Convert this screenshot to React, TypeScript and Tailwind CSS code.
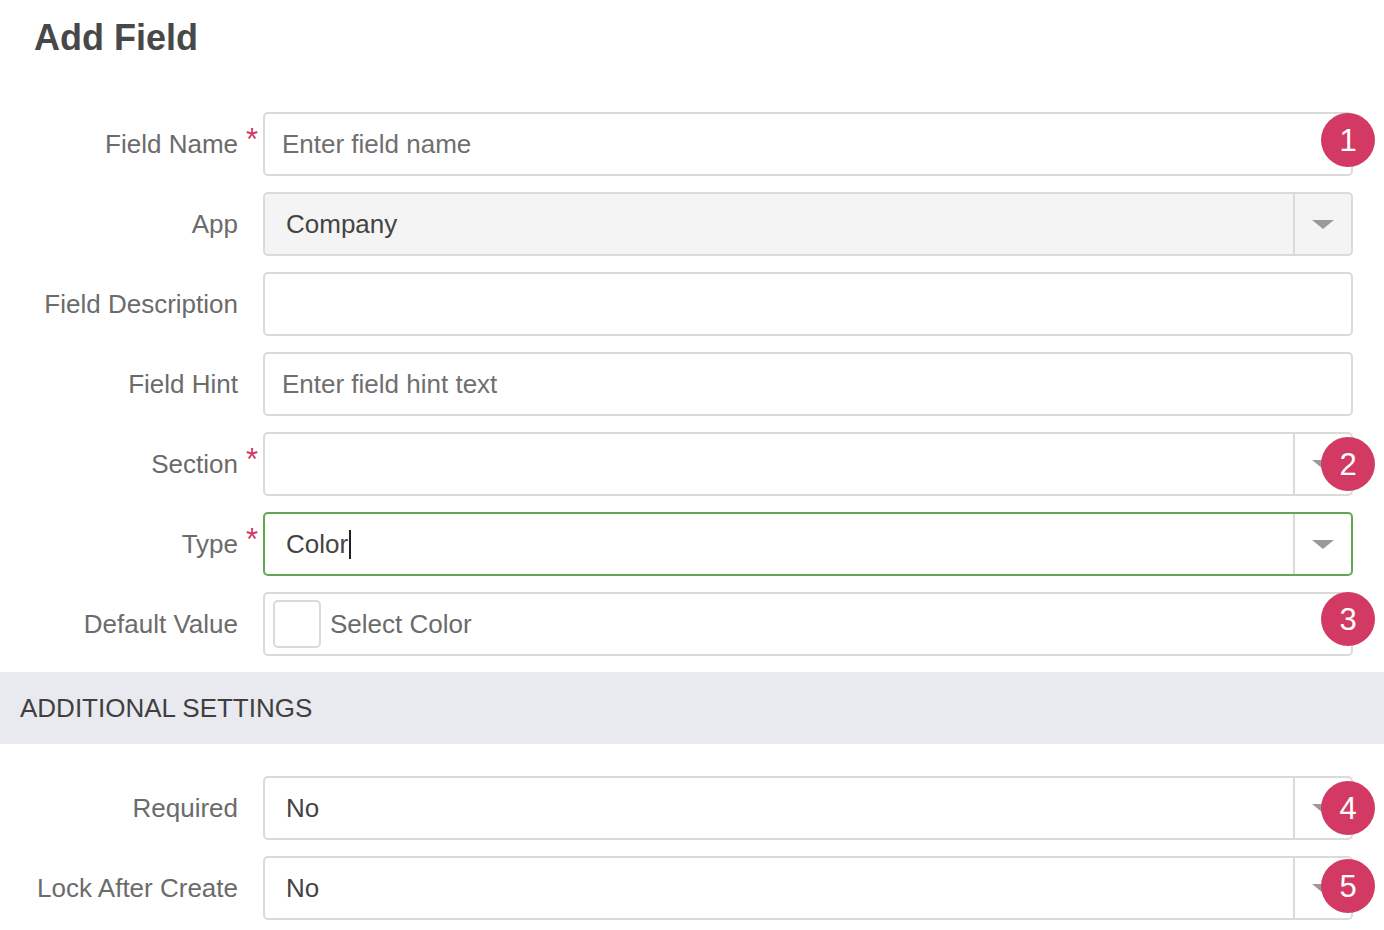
import React from "react";

const font = { fontFamily: '"Liberation Sans", Arial, sans-serif' };

function Badge({ n, className }: { n: number; className: string }) {
  return (
    <div
      className={`absolute right-[-22px] flex h-[54px] w-[54px] items-center justify-center rounded-full bg-[#d33a63] text-[31px] leading-none text-white ${className}`}
    >
      {n}
    </div>
  );
}

function Caret() {
  return (
    <div className="flex w-[58px] shrink-0 items-center justify-center border-l-2 border-[#dadada]">
      <svg width="22" height="9" viewBox="0 0 22 9">
        <path d="M0 0 L22 0 L11 9 Z" fill="#9a9a9a" />
      </svg>
    </div>
  );
}

function Row({
  label,
  required,
  children,
}: {
  label: string;
  required?: boolean;
  children: React.ReactNode;
}) {
  return (
    <div className="relative flex h-[64px] items-stretch">
      <div className="relative flex w-[263px] shrink-0 items-center justify-end pr-[25px] text-[26px] text-[#6b6b6b]">
        {label}
        {required && (
          <span className="absolute right-[5px] top-[12px] text-[31px] leading-none text-[#d33a63]">*</span>
        )}
      </div>
      <div className="flex-1">{children}</div>
    </div>
  );
}

export default function App() {
  return (
    <div className="min-h-[930px] w-[1384px] overflow-hidden bg-white" style={font}>
      <h1 className="pl-[34px] pt-[17px] text-[36px] font-bold leading-[42px] text-[#484848]">Add Field</h1>

      <div className="mt-[53px] flex flex-col gap-[16px] pr-[31px]">
        <Row label="Field Name" required>
          <div className="flex h-full items-center rounded-[5px] border-2 border-[#dadada] bg-white pl-[17px] text-[26px] text-[#6f6f6f]">
            Enter field name
          </div>
          <Badge n={1} className="top-[1px]" />
        </Row>

        <Row label="App">
          <div className="flex h-full rounded-[5px] border-2 border-[#dadada] bg-[#f4f4f4] text-[26px] text-[#444]">
            <div className="flex flex-1 items-center pl-[21px]">Company</div>
            <Caret />
          </div>
        </Row>

        <Row label="Field Description">
          <div className="h-full rounded-[5px] border-2 border-[#dadada] bg-white" />
        </Row>

        <Row label="Field Hint">
          <div className="flex h-full items-center rounded-[5px] border-2 border-[#dadada] bg-white pl-[17px] text-[26px] text-[#6f6f6f]">
            Enter field hint text
          </div>
        </Row>

        <Row label="Section" required>
          <div className="flex h-full rounded-[5px] border-2 border-[#dadada] bg-white">
            <div className="flex-1" />
            <Caret />
          </div>
          <Badge n={2} className="top-[5px]" />
        </Row>

        <Row label="Type" required>
          <div className="flex h-full rounded-[5px] border-2 border-[#5fa84f] bg-white text-[26px] text-[#444]">
            <div className="flex flex-1 items-center pl-[21px]">
              Color
              <span className="ml-[1px] inline-block h-[29px] w-[2px] bg-[#222]" />
            </div>
            <Caret />
          </div>
        </Row>

        <Row label="Default Value">
          <div className="flex h-full items-center gap-[9px] rounded-[5px] border-2 border-[#dadada] bg-white pl-[8px] text-[26px] text-[#6b6b6b]">
            <div className="h-[48px] w-[48px] rounded-[5px] border-2 border-[#dadada] bg-white" />
            Select Color
          </div>
          <Badge n={3} className="top-[0px]" />
        </Row>
      </div>

      <div className="mt-[16px] flex h-[72px] items-center bg-[#e9eaef] pl-[20px] text-[26px] text-[#3f3f3f]">
        ADDITIONAL SETTINGS
      </div>

      <div className="mt-[32px] flex flex-col gap-[16px] pr-[31px]">
        <Row label="Required">
          <div className="flex h-full rounded-[5px] border-2 border-[#dadada] bg-white text-[26px] text-[#444]">
            <div className="flex flex-1 items-center pl-[21px]">No</div>
            <Caret />
          </div>
          <Badge n={4} className="top-[5px]" />
        </Row>

        <Row label="Lock After Create">
          <div className="flex h-full rounded-[5px] border-2 border-[#dadada] bg-white text-[26px] text-[#444]">
            <div className="flex flex-1 items-center pl-[21px]">No</div>
            <Caret />
          </div>
          <Badge n={5} className="top-[3px]" />
        </Row>
      </div>
    </div>
  );
}
